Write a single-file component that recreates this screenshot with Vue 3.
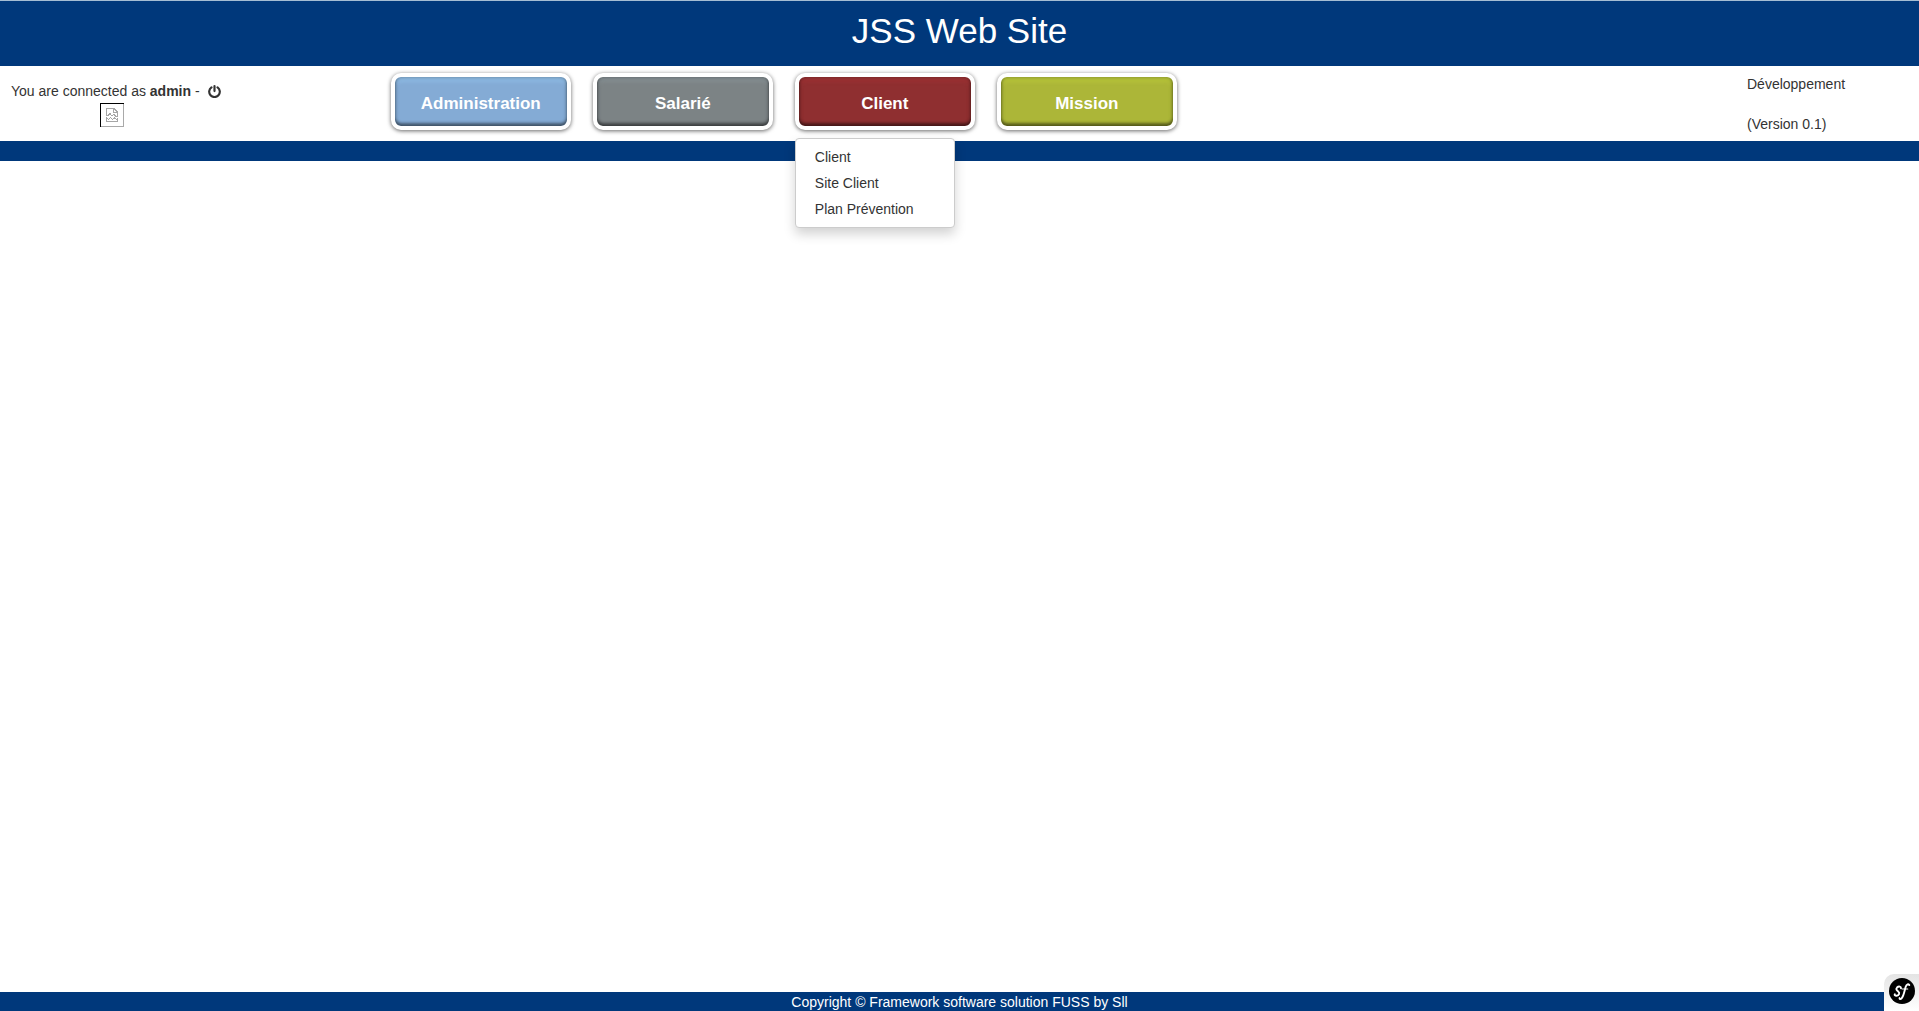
<script setup>
const sections = [
  { name: 'Administration', tone: 'blue' },
  { name: 'Salarié', tone: 'grey' },
  { name: 'Client', tone: 'red', items: ['Client', 'Site Client', 'Plan Prévention'] },
  { name: 'Mission', tone: 'green' },
]
</script>

<template>
  <div class="page">
    <header class="banner">
      <h1>JSS Web Site</h1>
    </header>

    <div class="top">
      <div class="user">
        <p>
          You are connected as <strong>admin</strong> -
          <a href="#" class="logout" aria-label="Log out">
            <svg class="power" viewBox="0 0 12 12" width="13" height="13">
              <path d="M3.2 2.2A4.900 4.900 0 1 0 8.800 2.200" fill="none" stroke="#333" stroke-width="2" stroke-linecap="round" />
              <path d="M6 1v4.600" stroke="#333" stroke-width="2" stroke-linecap="round" />
            </svg>
          </a>
        </p>
        <svg class="picture" viewBox="0 0 24 24" width="24" height="24" shape-rendering="crispEdges">
          <path d="M0 23.500H24M23.500 0V24" stroke="#a9a9a9" />
          <path d="M0 .5H24M.5 0V24" stroke="#000" />
          <g fill="none" stroke="#a6a6a6">
            <path d="M6.500 13V5.500H14L17.500 9V13M13.500 5V9.500H18" />
            <path d="M6 12.500H8L10 10.500L12 13L14 11.500L16 13.500H18" />
            <path d="M6.500 19V15L8.500 16.500L10.500 14.500L12.500 16.500L14.500 15L16.500 16.500L17.500 15.500V18.500H6" />
          </g>
        </svg>
      </div>

      <nav class="menu">
        <div v-for="section in sections" :key="section.name" class="entry">
          <button type="button" :class="['tab', section.tone]">{{ section.name }}</button>
          <ul v-if="section.items" class="dropdown">
            <li v-for="item in section.items" :key="item"><a href="#">{{ item }}</a></li>
          </ul>
        </div>
      </nav>

      <div class="version">
        <p>Développement</p>
        <p>(Version 0.1)</p>
      </div>
    </div>
    <div class="strip"></div>

    <main></main>

    <footer>Copyright © Framework software solution FUSS by Sll</footer>

    <button type="button" class="toolbar" aria-label="Debug toolbar">
      <svg viewBox="0 0 26 26" width="26" height="26">
        <circle cx="13" cy="13" r="13" fill="#000" />
        <g fill="none" stroke="#fff" stroke-linecap="round">
          <path d="M12 10.300C12.200 8.400 9.800 7.900 8.200 9.300C6.400 11.200 7.700 12.300 9.200 13.400C11.200 15 10 17.500 7.600 17.700C6.100 17.800 5.200 17 5.800 16.200" stroke-width="1.900" />
          <path d="M20.300 7.100C19.700 5.500 17.500 5.900 16.600 9C15.600 12.500 14.700 18.200 12.600 20.400C11.600 21.400 10.300 21 10.600 20.100" stroke-width="1.900" />
          <path d="M13.400 11H18.700" stroke-width="1.200" />
        </g>
      </svg>
    </button>
  </div>
</template>

<style>
body {
  margin: 0;
}
</style>

<style scoped>
.page {
  display: flex;
  flex-direction: column;
  min-height: 100vh;
  background: #fff;
  color: #333;
  font: 14px/20px "Liberation Sans", Arial, sans-serif;
}
h1,
p,
ul {
  margin: 0;
  padding: 0;
}
.banner {
  box-sizing: border-box;
  height: 66px;
  padding-top: 10px;
  border-top: 1px solid #a5bdd3;
  background: #00387b;
  color: #fff;
  text-align: center;
}
h1 {
  font-size: 35px;
  font-weight: 400;
  line-height: 40px;
}
.top {
  display: flex;
  height: 75px;
}
.user {
  box-sizing: border-box;
  width: 20%;
  padding: 15px 0 0 11px;
}
.user p {
  height: 22px;
}
.logout {
  margin-left: 4px;
}
.power {
  vertical-align: -2px;
}
.picture {
  display: block;
  margin-left: 89px;
}
.menu {
  display: flex;
  flex: 1;
  align-items: flex-start;
  gap: 22px;
  padding: 7px 0 0 7px;
}
.entry {
  position: relative;
}
.tab {
  display: block;
  box-sizing: border-box;
  width: 180px;
  height: 57px;
  padding: 5px 0 0;
  border: 4px solid #fff;
  border-radius: 10px;
  color: #fff;
  font: bold 17px/24px "Liberation Sans", Arial, sans-serif;
  box-shadow: 0 1px 4px rgba(0, 0, 0, 0.6), inset 0 0 4px rgba(0, 0, 0, 0.4),
    inset 0 -3px 3px rgba(0, 0, 0, 0.4), inset 0 4px 4px var(--shine);
}
.blue {
  --shine: #91c0ea;
  background: #84abd5;
}
.grey {
  --shine: #889296;
  background: #7c8385;
}
.red {
  --shine: #a03234;
  background: #8f2f30;
}
.green {
  --shine: #bcca3a;
  background: #acb638;
}
.dropdown {
  position: absolute;
  z-index: 1;
  top: 100%;
  left: 0;
  box-sizing: border-box;
  width: 160px;
  margin-top: 8px;
  padding: 5px 0;
  border: 1px solid #ccc;
  border-radius: 4px;
  background: #fff;
  list-style: none;
  box-shadow: 0 6px 12px rgba(0, 0, 0, 0.18);
}
.dropdown a {
  display: block;
  padding: 3px 19px;
  color: #333;
  text-decoration: none;
}
.version {
  width: 172px;
  padding-top: 8px;
}
.version p + p {
  margin-top: 20px;
}
.strip {
  height: 20px;
  background: #00387b;
}
main {
  flex: 1;
}
footer {
  height: 19px;
  background: #00387b;
  color: #fff;
  text-align: center;
}
.toolbar {
  position: fixed;
  right: 0;
  bottom: 0;
  box-sizing: border-box;
  width: 35px;
  height: 37px;
  padding: 4px 4px 7px 5px;
  border: 0;
  border-radius: 10px 0 0 0;
  background: linear-gradient(#e4e4e4, #fff);
}
.toolbar svg {
  display: block;
}
</style>
